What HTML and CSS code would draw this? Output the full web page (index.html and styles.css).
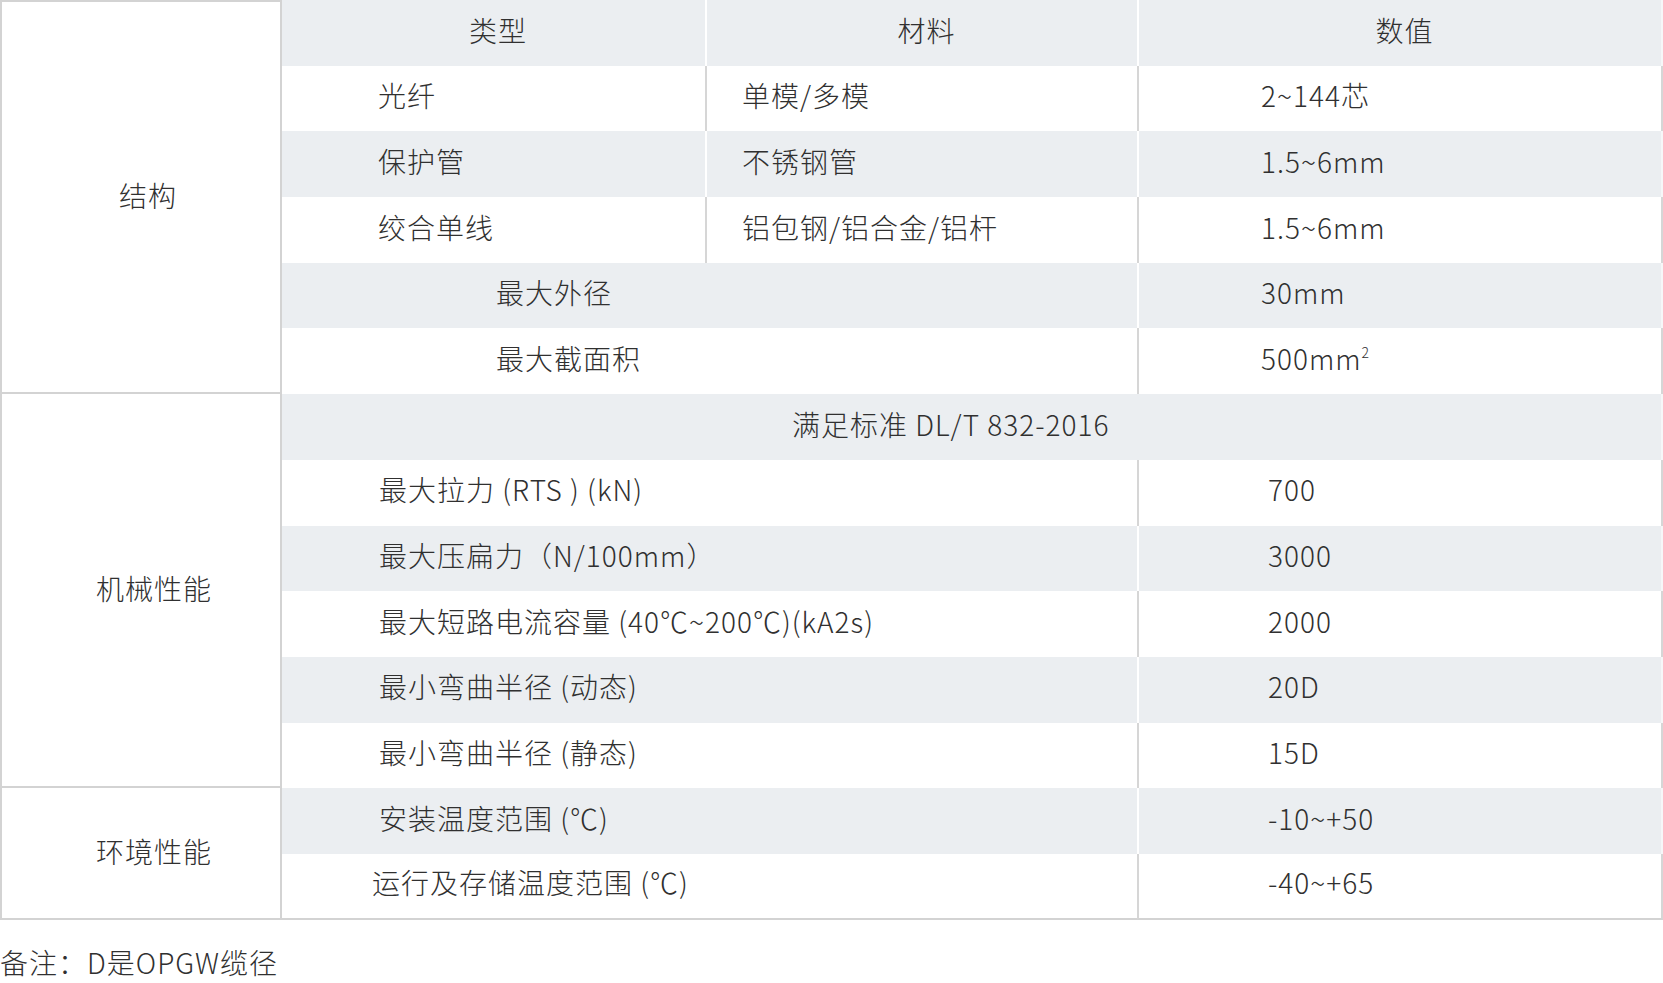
FILE: index.html
```html
<!DOCTYPE html>
<html lang="zh-CN">
<head>
<meta charset="utf-8">
<title>OPGW 参数</title>
<link rel="stylesheet" href="styles.css">
</head>
<body>
<table class="spec">
  <colgroup>
    <col class="c-grp">
    <col class="c-type">
    <col class="c-mat">
    <col class="c-val">
  </colgroup>
  <tbody>
    <tr class="gray">
      <td class="grp grp-first" rowspan="6">结构</td>
      <td class="head">类型</td>
      <td class="head sep">材料</td>
      <td class="head sep last">数值</td>
    </tr>
    <tr class="white">
      <td class="type">光纤</td>
      <td class="mat sep">单模/多模</td>
      <td class="val sep last">2~144芯</td>
    </tr>
    <tr class="gray">
      <td class="type">保护管</td>
      <td class="mat sep">不锈钢管</td>
      <td class="val sep last">1.5~6mm</td>
    </tr>
    <tr class="white">
      <td class="type">绞合单线</td>
      <td class="mat sep">铝包钢/铝合金/铝杆</td>
      <td class="val sep last">1.5~6mm</td>
    </tr>
    <tr class="gray">
      <td class="wide" colspan="2">最大外径</td>
      <td class="val sep last">30mm</td>
    </tr>
    <tr class="white">
      <td class="wide" colspan="2">最大截面积</td>
      <td class="val sep last">500mm<sup>2</sup></td>
    </tr>
    <tr class="gray">
      <td class="grp grp-wide" rowspan="6">机械性能</td>
      <td class="std last" colspan="3">满足标准 DL/T 832-2016</td>
    </tr>
    <tr class="white">
      <td class="prop" colspan="2">最大拉力 (RTS ) (kN)</td>
      <td class="val2 sep last">700</td>
    </tr>
    <tr class="gray">
      <td class="prop" colspan="2">最大压扁力（N/100mm）</td>
      <td class="val2 sep last">3000</td>
    </tr>
    <tr class="white">
      <td class="prop" colspan="2">最大短路电流容量 (40℃~200℃)(kA2s)</td>
      <td class="val2 sep last">2000</td>
    </tr>
    <tr class="gray">
      <td class="prop" colspan="2">最小弯曲半径 (动态)</td>
      <td class="val2 sep last">20D</td>
    </tr>
    <tr class="white">
      <td class="prop" colspan="2">最小弯曲半径 (静态)</td>
      <td class="val2 sep last">15D</td>
    </tr>
    <tr class="gray">
      <td class="grp grp-wide" rowspan="2">环境性能</td>
      <td class="prop" colspan="2">安装温度范围 (℃)</td>
      <td class="val2 sep last">-10~+50</td>
    </tr>
    <tr class="white bottom">
      <td class="prop prop-tight" colspan="2">运行及存储温度范围 (℃)</td>
      <td class="val2 sep last">-40~+65</td>
    </tr>
  </tbody>
</table>
<p class="note">备注：D是OPGW缆径</p>
</body>
</html>
```

FILE: styles.css
```css
html, body {
  margin: 0;
  padding: 0;
  background: #ffffff;
}

body {
  font-family: "Noto Sans CJK SC", "Noto Sans", sans-serif;
  font-weight: 300;
  font-size: 28px;
  letter-spacing: 1px;
  color: #303030;
}

.spec {
  width: 1663px;
  table-layout: fixed;
  border-collapse: separate;
  border-spacing: 0;
}

.c-grp { width: 282px; }
.c-type { width: 423px; }
.c-mat { width: 432px; }
.c-val { width: 526px; }

.spec tr { height: 65.7px; }

.spec td {
  padding: 0 0 5px 0;
  white-space: nowrap;
  vertical-align: middle;
  line-height: 1.2;
}

.gray td { background: #ebeef1; }
.white td { background: #ffffff; }

.spec td.grp {
  background: #ffffff;
  text-align: center;
  padding-left: 14px;
  padding-bottom: 2px;
  border-left: 2px solid #d3d3d3;
  border-right: 2px solid #d3d3d3;
  border-bottom: 2px solid #d3d3d3;
}

.spec td.grp-wide { padding-left: 26px; }
.spec td.grp-first { border-top: 2px solid #d3d3d3; }

.gray td.sep { border-left: 2px solid #ffffff; }
.white td.sep { border-left: 2px solid #d6d6d6; }
.gray td.last { border-right: 2px solid #f6f7f8; }
.white td.last { border-right: 2px solid #d6d6d6; }

.bottom td { border-bottom: 2px solid #d3d3d3; }

.head { text-align: center; padding-left: 9px !important; }

.type { padding-left: 96px !important; }
.mat { padding-left: 35px !important; }
.val { padding-left: 122px !important; }
.wide { padding-left: 214px !important; }
.std { padding-left: 510px !important; }
.prop { padding-left: 97px !important; }
.prop-tight { padding-left: 90px !important; }
.val2 { padding-left: 129px !important; }

.spec sup {
  font-size: 14px;
  line-height: 0;
  vertical-align: 0;
  position: relative;
  top: -12px;
  letter-spacing: 0;
}

.note {
  margin: 22px 0 0 0;
  line-height: 40px;
}
```
